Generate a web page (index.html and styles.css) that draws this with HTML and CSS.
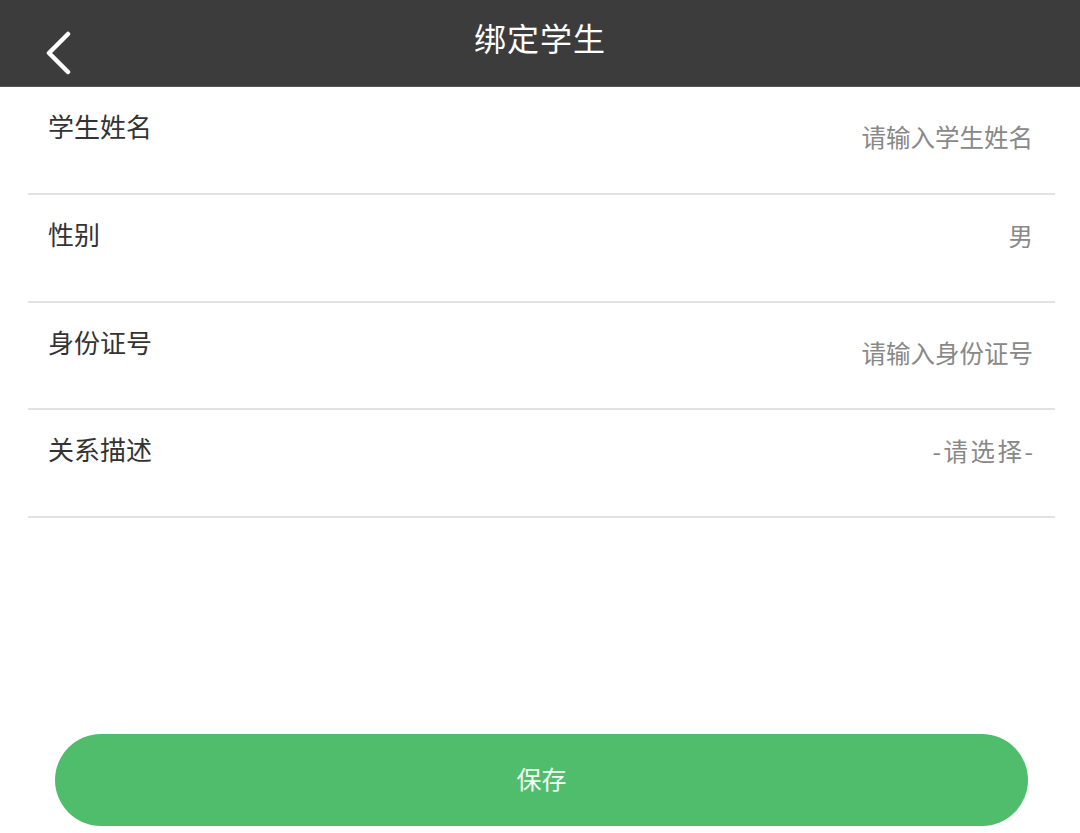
FILE: index.html
```html
<!DOCTYPE html>
<html lang="zh-CN">
<head>
  <meta charset="UTF-8" />
  <meta name="viewport" content="width=device-width, initial-scale=1.0" />
  <title>绑定学生</title>
  <link rel="stylesheet" href="styles.css">
</head>
<body>
  <div class="page">
    <header class="topbar">
      <a class="back" href="#">
        <svg viewBox="0 0 30 44" width="30" height="44">
          <path d="M24 3 L5 22 L24 41" fill="none" stroke="#fff" stroke-width="4.5" stroke-linecap="round" stroke-linejoin="round" />
        </svg>
      </a>
      <h1 class="title">绑定学生</h1>
    </header>

    <form class="form">
      <div class="row">
        <span class="label">学生姓名</span>
        <span class="value">请输入学生姓名</span>
      </div>
      <div class="row">
        <span class="label">性别</span>
        <span class="value value-select">男</span>
      </div>
      <div class="row">
        <span class="label">身份证号</span>
        <span class="value">请输入身份证号</span>
      </div>
      <div class="row">
        <span class="label">关系描述</span>
        <span class="value value-select value-dashed">-请选择-</span>
      </div>
    </form>

    <div class="actions">
      <button type="button" class="save">保存</button>
    </div>
  </div>
</body>
</html>
```

FILE: styles.css
```css
/* Reset & Base */
* {
  margin: 0;
  padding: 0;
  box-sizing: border-box;
  font-family: "Noto Sans CJK SC", "Noto Sans", sans-serif;
}

body {
  background: #fff;
  width: 1080px;
  height: 833px;
  overflow: hidden;
}

.page {
  display: flex;
  flex-direction: column;
  height: 100%;
}

/* Top bar */
.topbar {
  position: relative;
  height: 87px;
  background: #3c3c3c;
  border-bottom: 1px solid #555;
  display: flex;
  justify-content: center;
  align-items: flex-start;
}

.back {
  position: absolute;
  left: 44px;
  top: 31px;
  display: block;
  line-height: 0;
}

.title {
  margin-top: 14px;
  color: #fff;
  font-size: 32px;
  font-weight: 400;
  line-height: 46px;
  letter-spacing: 1px;
}

/* Form rows */
.form {
  display: flex;
  flex-direction: column;
  padding: 0 25px 0 28px;
}

.row {
  height: 107.5px;
  display: flex;
  justify-content: space-between;
  align-items: flex-start;
  padding: 0 22px 0 20px;
  border-bottom: 2px solid #e2e2e2;
}

.row:first-child {
  height: 108px;
}

.label {
  margin-top: 21px;
  color: #333;
  font-size: 26px;
  line-height: 36px;
}

.value {
  margin-top: 32px;
  color: #888;
  font-size: 24.5px;
  line-height: 36px;
}

.value-select {
  margin-top: 23px;
}

.value-dashed {
  letter-spacing: 2.5px;
  margin-right: -2.5px;
}

/* Button */
.actions {
  margin-top: auto;
  padding: 0 52px 7px 55px;
}

.save {
  width: 100%;
  height: 92px;
  padding-bottom: 5px;
  border: none;
  border-radius: 46px;
  background: #50bd6c;
  color: #f2fff4;
  font-size: 25px;
  cursor: pointer;
}
```
